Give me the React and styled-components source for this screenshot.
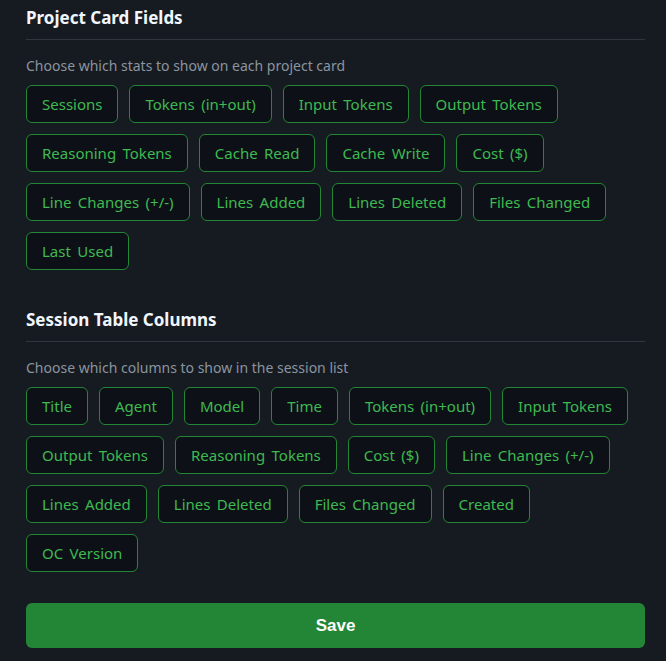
import React, { useState } from "react";
import styled, { createGlobalStyle } from "styled-components";

const GlobalStyle = createGlobalStyle`
  body {
    margin: 0;
    background: #161b22;
    font-family: "Noto Sans", "Open Sans", sans-serif;
  }
`;

const Page = styled.div`
  padding: 0 21px 13px 26px;
  background: #161b22;
  min-height: 661px;
  box-sizing: border-box;
`;

const Section = styled.section`
  margin-bottom: ${(props) => props.$gap || 0}px;
`;

const Title = styled.h3`
  margin: 0;
  padding: 5px 0 9px;
  font-size: 17px;
  font-weight: 700;
  line-height: 25px;
  color: #f0f6fc;
  border-bottom: 1px solid #30363d;
`;

const Hint = styled.p`
  margin: 15px 0 8px;
  font-size: 14px;
  line-height: 22px;
  color: #8b949e;
`;

const Chips = styled.div`
  display: flex;
  flex-wrap: wrap;
  gap: 11px;
`;

const Chip = styled.button`
  height: 38px;
  padding: 0 15px;
  border: 1px solid #238636;
  border-radius: 6px;
  background: #0d1117;
  color: #3fb950;
  font-family: inherit;
  font-size: 15px;
  word-spacing: 2.5px;
  cursor: pointer;
  opacity: ${(props) => (props.$on ? 1 : 0.5)};
`;

const SaveButton = styled.button`
  display: block;
  width: 100%;
  height: 45px;
  border: none;
  border-radius: 6px;
  background: #238636;
  color: #ffffff;
  font-family: "Liberation Sans", Arial, sans-serif;
  font-size: 17px;
  font-weight: 700;
  cursor: pointer;
`;

const projectFields = [
  "Sessions", "Tokens (in+out)", "Input Tokens", "Output Tokens",
  "Reasoning Tokens", "Cache Read", "Cache Write", "Cost ($)",
  "Line Changes (+/-)", "Lines Added", "Lines Deleted", "Files Changed",
  "Last Used",
];

const sessionColumns = [
  "Title", "Agent", "Model", "Time", "Tokens (in+out)", "Input Tokens",
  "Output Tokens", "Reasoning Tokens", "Cost ($)", "Line Changes (+/-)",
  "Lines Added", "Lines Deleted", "Files Changed", "Created", "OC Version",
];

function ChipGroup({ items }) {
  const [on, setOn] = useState(() => items.map(() => true));
  const toggle = (i) => setOn(on.map((v, j) => (j === i ? !v : v)));
  return (
    <Chips>
      {items.map((label, i) => (
        <Chip key={label} $on={on[i]} onClick={() => toggle(i)}>
          {label}
        </Chip>
      ))}
    </Chips>
  );
}

export default function App() {
  return (
    <Page>
      <GlobalStyle />
      <Section $gap={32}>
        <Title>Project Card Fields</Title>
        <Hint>Choose which stats to show on each project card</Hint>
        <ChipGroup items={projectFields} />
      </Section>
      <Section $gap={31}>
        <Title>Session Table Columns</Title>
        <Hint>Choose which columns to show in the session list</Hint>
        <ChipGroup items={sessionColumns} />
      </Section>
      <SaveButton>Save</SaveButton>
    </Page>
  );
}
